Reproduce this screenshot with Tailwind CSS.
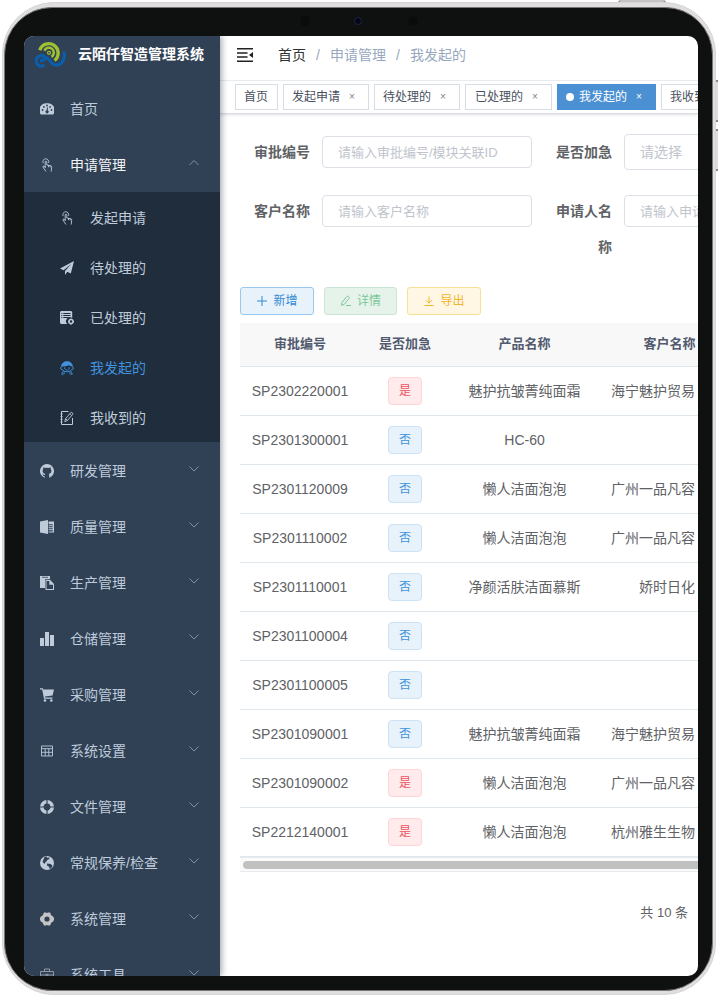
<!DOCTYPE html>
<html lang="zh-CN">
<head>
<meta charset="utf-8">
<meta name="viewport" content="width=device-width, initial-scale=1">
<title>云陌仟智造管理系统</title>
<script src="https://cdn.jsdelivr.net/npm/@tailwindcss/browser@4"></script>
</head>
<body class="bg-white font-['Liberation_Sans','Noto_Sans_CJK_SC',sans-serif] text-sm text-[#606266]">
<div class="relative h-screen pt-0.5 pr-[3px] pb-0.5 pl-0.5">
  <!-- device side buttons -->
  <span class="absolute right-[53px] top-0 h-[3px] w-12 rounded-t-sm border-x-2 border-[#999] bg-[#c4c4c4]"></span>
  <span class="absolute right-px top-20 h-[42px] w-[3px] border-y-2 border-[#888] bg-[#dedcdc]"></span>
  <span class="absolute right-px top-[129px] h-[42px] w-[3px] border-y-2 border-[#888] bg-[#dedcdc]"></span>

  <div class="relative h-full rounded-[52px] border border-[#d6d4d4] bg-[#e0dede] pt-1 pr-0.5 pb-[3px] pl-px">
    <div class="relative h-full rounded-[48px] border border-[#777] bg-[#0f1110] pt-[28px] pr-[14px] pb-[14px] pl-[19px]">
      <span class="absolute left-[349px] top-[9px] size-2 rounded-full border border-[#1d2350] bg-[#05060f]"></span>
      <span class="absolute left-[295px] top-2 size-2.5 rounded-full bg-[#0a0c0b]"></span>
      <span class="absolute left-[403px] top-2 size-2.5 rounded-full bg-[#0a0c0b]"></span>

      <div class="flex h-full overflow-hidden rounded-[10px] bg-white">
        <!-- sidebar -->
        <aside class="relative z-10 w-[196px] shrink-0 overflow-hidden bg-[#304156] text-[#bfcbd9] shadow-[2px_0_6px_rgba(0,21,41,0.35)]">
          <a href="#" class="flex h-11 items-start pl-2.5 text-sm font-bold text-white">
            <svg class="mt-1 h-8 w-8" viewBox="0 0 32 32" fill="none">
              <path d="M5.800 10.200A9.400 9.400 0 1 1 20.500 20.500" stroke="#9fc131" stroke-width="3.400"/>
              <path d="M10.400 10.800A4.900 4.900 0 1 1 17.500 16.800" stroke="#9fc131" stroke-width="2.600"/>
              <circle cx="15" cy="12.800" r="1.500" stroke="#9fc131" stroke-width="1.200"/>
              <path d="M11.200 17.300A5.200 5.200 0 1 0 10.600 25" stroke="#0b5ea8" stroke-width="3.200"/>
              <path d="M8 20.500L13 17.800C16 19 17 25.200 22 25.200C28 25.200 31.500 19 30 11.500" stroke="#0b5ea8" stroke-width="3.200"/>
              <circle cx="7.700" cy="20.500" r="1.900" fill="#0b5ea8"/>
            </svg>
            <span class="ml-3 whitespace-nowrap leading-9">云陌仟智造管理系统</span>
          </a>
          <nav aria-label="主菜单">
            <a href="#" class="flex h-14 items-center gap-4 px-4 pt-0.5">
              <svg class="size-3.5" viewBox="0 0 14 14"><path fill="currentColor" d="M7 1.200A7 7 0 0 0 .9 12.600H13.100A7 7 0 0 0 7 1.200Z"/><g fill="#304156"><circle cx="7" cy="3.500" r=".9"/><circle cx="3.900" cy="4.900" r=".9"/><circle cx="2.500" cy="8" r=".9"/><circle cx="10.100" cy="4.900" r=".9"/><circle cx="11.500" cy="8" r=".9"/><path d="M7.200 5.200L8 5.400L7.700 8.200A1.600 1.600 0 1 1 6.500 8.200Z"/></g></svg>
              <span>首页</span>
            </a>
            <button type="button" aria-expanded="true" class="flex h-14 w-full items-center gap-4 px-4 pt-0.5 text-left text-[#f4f4f5]">
              <svg class="size-3.5" viewBox="0 0 14 14" fill="none" stroke="#bfcbd9" stroke-width=".9" stroke-linejoin="round" stroke-linecap="round"><path d="M3 4.800A3 3 0 1 1 8.700 4.500M5.200 9.500V4A.8.800 0 0 1 6.800 4V7L10.700 7.800Q11.900 8 11.700 9.300L11.200 13.200M5.200 9.200L3.900 8.200Q2.700 7.900 2.900 9L5.800 13.200M8.500 7.400V8.800M10.200 7.700V9"/></svg>
              <span class="flex-1">申请管理</span>
              <svg class="mr-1 mb-1 h-2 w-3" viewBox="0 0 12 8" fill="none" stroke="#8290a1"><path d="M1.500 6L6 1.500L10.500 6"/></svg>
            </button>
            <div class="bg-[#1f2d3d]">
              <a href="#" class="flex h-[50px] items-center gap-4 pt-0.5 pl-9">
                <svg class="size-3.5" viewBox="0 0 14 14" fill="none" stroke="currentColor" stroke-width=".9" stroke-linejoin="round" stroke-linecap="round"><path d="M3 4.800A3 3 0 1 1 8.700 4.500M5.200 9.500V4A.8.800 0 0 1 6.800 4V7L10.700 7.800Q11.900 8 11.700 9.300L11.200 13.200M5.200 9.200L3.900 8.200Q2.700 7.900 2.900 9L5.800 13.200M8.500 7.400V8.800M10.200 7.700V9"/></svg>
                <span>发起申请</span>
              </a>
              <a href="#" class="flex h-[50px] items-center gap-4 pt-0.5 pl-9">
                <svg class="size-3.5" viewBox="0 0 14 14" fill="currentColor"><path d="M14 0L0 7.600L3.600 9.200L11.500 2.800L5 9.900V14L7.300 10.800L10.800 12.400Z"/></svg>
                <span>待处理的</span>
              </a>
              <a href="#" class="flex h-[50px] items-center gap-4 pt-0.5 pl-9">
                <svg class="size-3.5" viewBox="0 0 14 14"><path fill="currentColor" d="M1 0H11.200L12.200 1V7A3.800 3.800 0 0 0 7.500 13H1L0 12V1Z"/><path d="M1.300 2.500H2.300M3.300 2.500H10.500M1.300 4.500H2.300M3.300 4.500H10.500M1.300 6.500H2.300M3.300 6.500H8.500" stroke="#1f2d3d"/><circle cx="11" cy="10.600" r="2" fill="none" stroke="currentColor" stroke-width="1.500"/><path d="M11 7.500V8.500M11 12.700V13.700M8 10.600H9M13 10.600H14" stroke="currentColor" stroke-width="1.200"/></svg>
                <span>已处理的</span>
              </a>
              <a href="#" aria-current="page" class="flex h-[50px] items-center gap-4 pt-0.5 pl-9 text-[#4292df]">
                <svg class="size-3.5" viewBox="0 0 14 14" fill="none" stroke="currentColor"><path fill="currentColor" stroke="none" d="M1 5.800C1.500 -1.600 12.500 -1.600 13 5.800L11.500 5.400Q10 4.800 9 4.300Q7 5.600 2.500 5.400Z"/><path d="M1.400 5.500Q-.2 7 1.300 8.600H2.200Q3.500 10.800 7 10.800Q10.500 10.800 11.800 8.600H12.700Q14.200 7 12.600 5.500M3.200 10.200Q1.800 11.500 2 13.800M10.800 10.200Q12.200 11.500 12 13.800"/><path stroke-width=".8" d="M5.300 8.600Q7 9.700 8.700 8.600M2.500 13H4.200V11.200M11.500 13H9.800V11.200"/><path stroke-width="1.300" d="M4 7.100H5.300M8.700 7.100H10"/></svg>
                <span>我发起的</span>
              </a>
              <a href="#" class="flex h-[50px] items-center gap-4 pt-0.5 pl-9">
                <svg class="size-3.5" viewBox="0 0 14 14" fill="none" stroke="currentColor"><path d="M8.500 .5H1.500V13.500H12.500V7M.5 3H2.600M.5 5.600H2.600M.5 8.300H2.600M.5 11H2.600"/><path stroke-width=".9" d="M4.800 10.700L5.500 7.800L10.700 1.600Q11.300 1 12 1.600L12.700 2.200Q13.200 2.800 12.700 3.400L7.500 9.400ZM5.500 7.800L7.500 9.400M9.800 2.700L11.700 4.400"/></svg>
                <span>我收到的</span>
              </a>
            </div>
            <button type="button" class="flex h-14 w-full items-center gap-4 px-4 pt-0.5 text-left">
              <svg class="size-3.5" viewBox="0 0 14 14"><path fill="currentColor" d="M4.800 13.700A7 7 0 1 1 9.200 13.700V11Q9.200 10.200 8.700 9.900Q11.400 9.500 11.400 6.800Q11.400 5.600 10.700 4.900Q11 4 10.600 3.200Q9.800 3.200 8.800 3.900Q7 3.500 5.200 3.900Q4.200 3.200 3.400 3.200Q3 4 3.300 4.900Q2.600 5.600 2.600 6.800Q2.600 9.500 5.300 9.900Q4.900 10.200 4.800 10.900Q3.600 11.300 3 10.200L2.200 9.700Q3 11 3.300 11.700Q3.900 12.400 4.800 12.200Z"/></svg>
              <span class="flex-1">研发管理</span>
              <svg class="mr-1 mb-1 h-2 w-3" viewBox="0 0 12 8" fill="none" stroke="#8290a1"><path d="M1.500 1.500L6 6L10.500 1.500"/></svg>
            </button>
            <button type="button" class="flex h-14 w-full items-center gap-4 px-4 pt-0.5 text-left">
              <svg class="size-3.5" viewBox="0 0 14 14" fill="currentColor"><path d="M0 1.600L8 0V14L0 12.400Z"/><path d="M8.600 1.500H14V12.500H8.600V11.500H12.800V10.300H8.600V9.300H12.800V8.300H8.600V7.300H12.800V6.300H8.600V5.300H12.800V4.300H8.600Z"/></svg>
              <span class="flex-1">质量管理</span>
              <svg class="mr-1 mb-1 h-2 w-3" viewBox="0 0 12 8" fill="none" stroke="#8290a1"><path d="M1.500 1.500L6 6L10.500 1.500"/></svg>
            </button>
            <button type="button" class="flex h-14 w-full items-center gap-4 px-4 pt-0.5 text-left">
              <svg class="size-3.5" viewBox="0 0 14 14" fill="currentColor"><path d="M0 0H10V3.200H5V12H0Z"/><path d="M2 1.300H8" stroke="#304156" stroke-width=".8"/><path fill-rule="evenodd" d="M5.500 4H10.200L14 8V14H5.500ZM6.500 5V13H13V8.800H9.300V5Z"/></svg>
              <span class="flex-1">生产管理</span>
              <svg class="mr-1 mb-1 h-2 w-3" viewBox="0 0 12 8" fill="none" stroke="#8290a1"><path d="M1.500 1.500L6 6L10.500 1.500"/></svg>
            </button>
            <button type="button" class="flex h-14 w-full items-center gap-4 px-4 pt-0.5 text-left">
              <svg class="size-3.5" viewBox="0 0 14 14" fill="currentColor"><path d="M0 6H4V14H0ZM5 0H9V14H5ZM10 3H14V14H10Z"/></svg>
              <span class="flex-1">仓储管理</span>
              <svg class="mr-1 mb-1 h-2 w-3" viewBox="0 0 12 8" fill="none" stroke="#8290a1"><path d="M1.500 1.500L6 6L10.500 1.500"/></svg>
            </button>
            <button type="button" class="flex h-14 w-full items-center gap-4 px-4 pt-0.5 text-left">
              <svg class="size-3.5" viewBox="0 0 14 14" fill="currentColor"><path d="M0 .2H2.800L3.300 1.500H14L12.500 7.600L4.800 8.600L5 9.600H12.500V10.700H4L2.200 1.400H0Z"/><circle cx="5" cy="12.500" r="1.300"/><circle cx="11.300" cy="12.500" r="1.300"/></svg>
              <span class="flex-1">采购管理</span>
              <svg class="mr-1 mb-1 h-2 w-3" viewBox="0 0 12 8" fill="none" stroke="#8290a1"><path d="M1.500 1.500L6 6L10.500 1.500"/></svg>
            </button>
            <button type="button" class="flex h-14 w-full items-center gap-4 px-4 pt-0.5 text-left">
              <svg class="size-3.5" viewBox="0 0 14 14" fill="none" stroke="currentColor" stroke-width=".9"><path d="M1.500 2H12.500V12H1.500ZM1.500 4.700H12.500M1.500 8.300H12.500M5.200 4.700V12M8.800 4.700V12"/></svg>
              <span class="flex-1">系统设置</span>
              <svg class="mr-1 mb-1 h-2 w-3" viewBox="0 0 12 8" fill="none" stroke="#8290a1"><path d="M1.500 1.500L6 6L10.500 1.500"/></svg>
            </button>
            <button type="button" class="flex h-14 w-full items-center gap-4 px-4 pt-0.5 text-left">
              <svg class="size-3.5" viewBox="0 0 14 14" fill="none"><circle cx="7" cy="7" r="5.200" stroke="currentColor" stroke-width="3.600"/><path d="M7 0V4M7 10V14M0 7H4M10 7H14" stroke="#304156" stroke-width="1.200"/></svg>
              <span class="flex-1">文件管理</span>
              <svg class="mr-1 mb-1 h-2 w-3" viewBox="0 0 12 8" fill="none" stroke="#8290a1"><path d="M1.500 1.500L6 6L10.500 1.500"/></svg>
            </button>
            <button type="button" class="flex h-14 w-full items-center gap-4 px-4 pt-0.5 text-left">
              <svg class="size-3.5" viewBox="0 0 14 14"><circle cx="7" cy="7" r="7" fill="currentColor"/><path fill="#304156" d="M4.500 1L6.500 .6L7.500 2L9.500 1.200L9.200 3L7 4.200L6.200 6L4.800 6.500L5.300 7.300L4.300 7.800L2.500 6L3.500 3.500ZM7 7.600L10.800 8L12.500 9.700L11.400 12L9.800 13L9 10.800L7 9.500Z"/></svg>
              <span class="flex-1">常规保养/检查</span>
              <svg class="mr-1 mb-1 h-2 w-3" viewBox="0 0 12 8" fill="none" stroke="#8290a1"><path d="M1.500 1.500L6 6L10.500 1.500"/></svg>
            </button>
            <button type="button" class="flex h-14 w-full items-center gap-4 px-4 pt-0.5 text-left">
              <svg class="size-3.5" viewBox="0 0 14 14" fill="#c4c4c4"><path fill-rule="evenodd" d="M4 .5H5.800Q7 1.400 8.200 .5H10L11.200 2.900Q11.400 4 13 4.200L14 6.200V7.800L13 9.800Q11.400 10 11.200 11.100L10 13.500H8.200Q7 12.600 5.800 13.500H4L2.800 11.100Q2.600 10 1 9.800L0 7.800V6.200L1 4.200Q2.600 4 2.800 2.900ZM7 4.400A2.600 2.600 0 1 0 7 9.600A2.600 2.600 0 1 0 7 4.400Z"/></svg>
              <span class="flex-1">系统管理</span>
              <svg class="mr-1 mb-1 h-2 w-3" viewBox="0 0 12 8" fill="none" stroke="#8290a1"><path d="M1.500 1.500L6 6L10.500 1.500"/></svg>
            </button>
            <button type="button" class="flex h-14 w-full items-center gap-4 px-4 pt-0.5 text-left">
              <svg class="size-3.5" viewBox="0 0 14 14" fill="none" stroke="#98a2ae" stroke-width=".9"><path d="M.5 3.500H13.500V12.500H.5ZM4.500 3.500V1H9.500V3.500M.5 7H13.500M7 5.500V9M5.300 7H8.700"/></svg>
              <span class="flex-1">系统工具</span>
              <svg class="mr-1 mb-1 h-2 w-3" viewBox="0 0 12 8" fill="none" stroke="#8290a1"><path d="M1.500 1.500L6 6L10.500 1.500"/></svg>
            </button>
          </nav>
        </aside>

        <!-- main area -->
        <main class="min-w-0 flex-1 overflow-hidden">
          <header class="flex h-[45px] items-center border-b border-[#eef1f4] pb-1.5 pl-[17px]">
            <button type="button" aria-label="收起菜单">
              <svg class="h-4 w-4" viewBox="0 0 16 16"><path d="M0 1.800H16M0 5.900H10.500M0 10H10.500M0 14.200H16" stroke="#222" stroke-width="1.500"/><path d="M16 4.900V11L12 8Z" fill="#222"/></svg>
            </button>
            <nav aria-label="面包屑" class="ml-[25px] flex whitespace-nowrap text-[#97a8be]">
              <a href="#" class="text-[#303133]">首页</a><span class="w-6 text-center">/</span>
              <span>申请管理</span><span class="w-6 text-center">/</span>
              <span>我发起的</span>
            </nav>
          </header>
          <div class="flex h-[33px] gap-[5px] whitespace-nowrap border-b border-[#d8dce5] pt-[3px] pl-[15px] text-xs text-[#495060] shadow-[0_1px_3px_rgba(0,0,0,0.12)]">
            <div class="flex h-[26px] shrink-0 items-center border border-[#d8dce5] px-2"><a href="#" class="w-[25px]">首页</a></div>
            <div class="flex h-[26px] w-[86px] shrink-0 items-center border border-[#d8dce5] pl-2"><a href="#">发起申请</a><button type="button" aria-label="关闭发起申请" class="w-6 text-[10px] text-[#7b8290]">×</button></div>
            <div class="flex h-[26px] w-[86px] shrink-0 items-center border border-[#d8dce5] pl-2"><a href="#">待处理的</a><button type="button" aria-label="关闭待处理的" class="w-6 text-[10px] text-[#7b8290]">×</button></div>
            <div class="flex h-[26px] w-[87px] shrink-0 items-center border border-[#d8dce5] pl-[9px]"><a href="#">已处理的</a><button type="button" aria-label="关闭已处理的" class="w-6 text-[10px] text-[#7b8290]">×</button></div>
            <div class="flex h-[26px] w-[99px] shrink-0 items-center bg-[#4a90d2] pl-[9px] text-white"><span class="mr-[5px] size-2 rounded-full bg-white"></span><a href="#">我发起的</a><button type="button" aria-label="关闭我发起的" class="w-6 text-[10px]">×</button></div>
            <div class="flex h-[26px] w-[86px] shrink-0 items-center border border-[#d8dce5] pl-2"><a href="#">我收到的</a></div>
          </div>

          <section class="pt-5 pl-5">
            <form class="grid w-max grid-cols-[auto_auto] gap-x-2.5 gap-y-[23px]">
              <div class="flex">
                <label for="code" class="w-[82px] px-3 text-right font-bold leading-9">审批编号</label>
                <input id="code" type="text" placeholder="请输入审批编号/模块关联ID" class="mt-0.5 h-8 w-[210px] rounded border border-[#dcdfe6] px-[15px] text-[13px] placeholder:text-[#c0c4cc]">
              </div>
              <div class="flex">
                <label for="urgent" class="w-[82px] px-3 text-right font-bold leading-9">是否加急</label>
                <select id="urgent" class="h-9 w-[210px] appearance-none rounded border border-[#dcdfe6] px-[15px] text-sm text-[#c0c4cc]"><option>请选择</option></select>
              </div>
              <div class="flex">
                <label for="customer" class="w-[82px] px-3 text-right font-bold leading-9">客户名称</label>
                <input id="customer" type="text" placeholder="请输入客户名称" class="mt-0.5 h-8 w-[210px] rounded border border-[#dcdfe6] px-[15px] text-[13px] placeholder:text-[#c0c4cc]">
              </div>
              <div class="flex">
                <label for="applicant" class="w-[82px] px-3 text-right font-bold leading-9">申请人名称</label>
                <input id="applicant" type="text" placeholder="请输入申请人名称" class="mt-0.5 h-8 w-[210px] rounded border border-[#dcdfe6] px-[15px] text-[13px] placeholder:text-[#c0c4cc]">
              </div>
            </form>

            <div class="mt-[22px] flex gap-2.5 text-xs">
              <button type="button" class="flex h-7 w-[74px] items-center justify-center gap-[5px] rounded-[3px] border border-[#98c8f0] bg-[#e8f2fb] text-[#3489d3]">
                <svg class="size-3" viewBox="0 0 12 12" stroke="currentColor"><path d="M1 6H11M6 1V11"/></svg>新增</button>
              <button type="button" class="flex h-7 w-[73px] items-center justify-center gap-[5px] rounded-[3px] border border-[#c9e6d4] bg-[#e6f3ea] text-[#7dc699]">
                <svg class="size-3" viewBox="0 0 12 12" fill="none" stroke="currentColor" stroke-linejoin="round"><path d="M1.500 10.300L2 7.500L6.800 1.500Q7.500 .8 8.300 1.400L9 2Q9.700 2.600 9.100 3.400L4.300 9.300ZM6 10.500H11"/></svg>详情</button>
              <button type="button" class="flex h-7 w-[74px] items-center justify-center gap-[5px] rounded-[3px] border border-[#fbdf92] bg-[#fff7e4] text-[#f0b52c]">
                <svg class="size-3" viewBox="0 0 12 12" fill="none" stroke="currentColor"><path d="M1.500 10.500H10.500M6 1.500V8M3 5.200L6 8.200L9 5.200"/></svg>导出</button>
            </div>

            <div class="mt-2 overflow-hidden">
              <table class="w-[500px] table-fixed border-separate border-spacing-0 whitespace-nowrap text-center [&_td]:h-[49px] [&_td]:border-b [&_td]:border-[#dfe6ec] [&_td]:p-0 [&_th]:h-11 [&_th]:border-b [&_th]:border-[#dfe6ec] [&_th]:bg-[#f8f8f9] [&_th]:p-0">
                <colgroup><col class="w-[120px]"><col class="w-[90px]"><col class="w-[149px]"><col class="w-[141px]"></colgroup>
                <thead class="text-[13px] text-[#515a6e]"><tr><th>审批编号</th><th>是否加急</th><th>产品名称</th><th>客户名称</th></tr></thead>
                <tbody>
                  <tr><td>SP2302220001</td><td><span class="inline-block h-7 w-[34px] rounded border border-[#ffd4d6] bg-[#ffebec] align-middle text-xs leading-[26px] text-[#ea5560]">是</span></td><td>魅护抗皱菁纯面霜</td><td><div class="pl-3 text-left">海宁魅护贸易</div></td></tr>
                  <tr><td>SP2301300001</td><td><span class="inline-block h-7 w-[34px] rounded border border-[#cbe2f7] bg-[#e8f2fb] align-middle text-xs leading-[26px] text-[#3f93da]">否</span></td><td>HC-60</td><td></td></tr>
                  <tr><td>SP2301120009</td><td><span class="inline-block h-7 w-[34px] rounded border border-[#cbe2f7] bg-[#e8f2fb] align-middle text-xs leading-[26px] text-[#3f93da]">否</span></td><td>懒人洁面泡泡</td><td><div class="pl-3 text-left">广州一品凡容</div></td></tr>
                  <tr><td>SP2301110002</td><td><span class="inline-block h-7 w-[34px] rounded border border-[#cbe2f7] bg-[#e8f2fb] align-middle text-xs leading-[26px] text-[#3f93da]">否</span></td><td>懒人洁面泡泡</td><td><div class="pl-3 text-left">广州一品凡容</div></td></tr>
                  <tr><td>SP2301110001</td><td><span class="inline-block h-7 w-[34px] rounded border border-[#cbe2f7] bg-[#e8f2fb] align-middle text-xs leading-[26px] text-[#3f93da]">否</span></td><td>净颜活肤洁面慕斯</td><td><div class="pl-10 text-left">娇时日化</div></td></tr>
                  <tr><td>SP2301100004</td><td><span class="inline-block h-7 w-[34px] rounded border border-[#cbe2f7] bg-[#e8f2fb] align-middle text-xs leading-[26px] text-[#3f93da]">否</span></td><td></td><td></td></tr>
                  <tr><td>SP2301100005</td><td><span class="inline-block h-7 w-[34px] rounded border border-[#cbe2f7] bg-[#e8f2fb] align-middle text-xs leading-[26px] text-[#3f93da]">否</span></td><td></td><td></td></tr>
                  <tr><td>SP2301090001</td><td><span class="inline-block h-7 w-[34px] rounded border border-[#cbe2f7] bg-[#e8f2fb] align-middle text-xs leading-[26px] text-[#3f93da]">否</span></td><td>魅护抗皱菁纯面霜</td><td><div class="pl-3 text-left">海宁魅护贸易</div></td></tr>
                  <tr><td>SP2301090002</td><td><span class="inline-block h-7 w-[34px] rounded border border-[#ffd4d6] bg-[#ffebec] align-middle text-xs leading-[26px] text-[#ea5560]">是</span></td><td>懒人洁面泡泡</td><td><div class="pl-3 text-left">广州一品凡容</div></td></tr>
                  <tr><td>SP2212140001</td><td><span class="inline-block h-7 w-[34px] rounded border border-[#ffd4d6] bg-[#ffebec] align-middle text-xs leading-[26px] text-[#ea5560]">是</span></td><td>懒人洁面泡泡</td><td><div class="pl-3 text-left">杭州雅生生物</div></td></tr>
                </tbody>
              </table>
              <div class="h-[15px] border-y border-[#e6e9ee] bg-[#fafafa] pt-[3px] pl-[3px]"><div class="h-2 rounded-l-full bg-[#c1c1c1]"></div></div>
            </div>
            <p class="mt-[31px] pr-2.5 text-right text-[13px] leading-5">共 10 条</p>
          </section>
        </main>
      </div>
    </div>
  </div>
</div>
</body>
</html>
